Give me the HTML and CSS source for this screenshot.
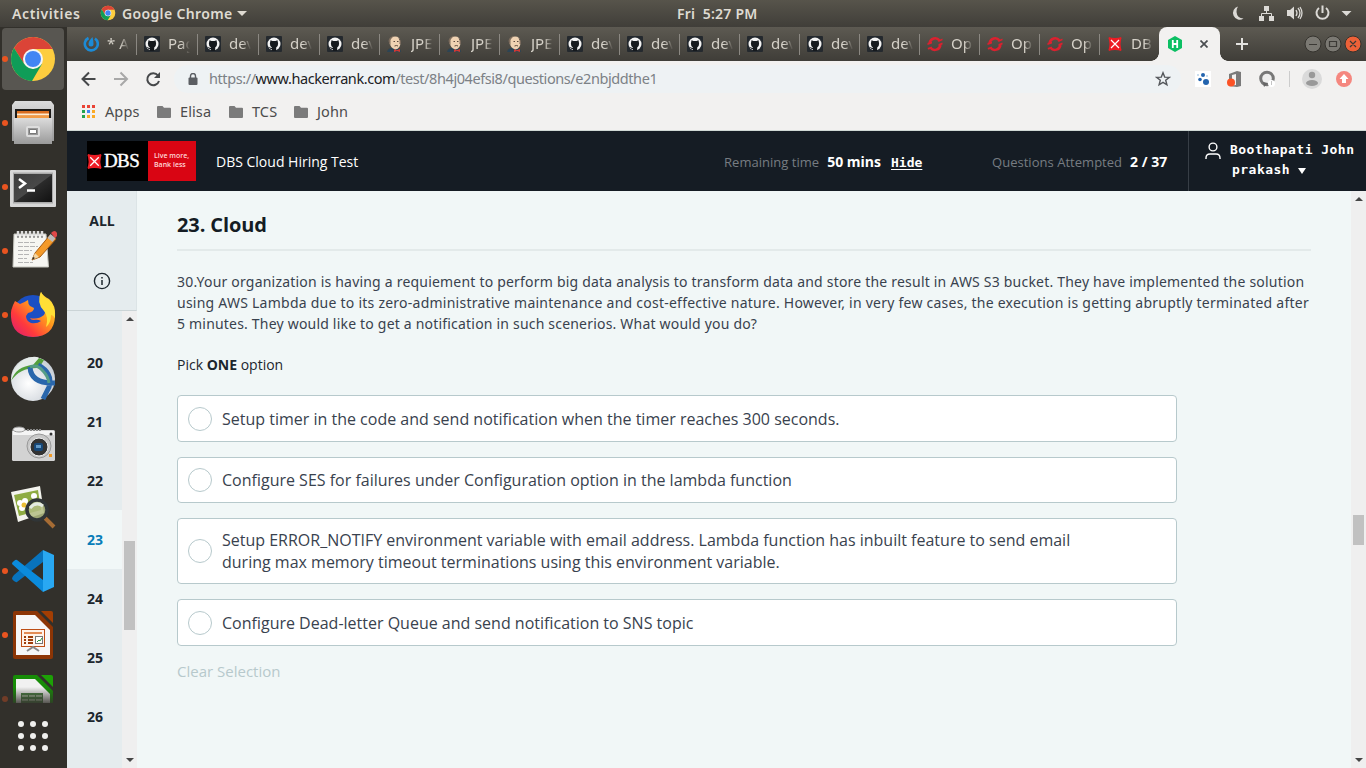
FILE: index.html
```html
<!DOCTYPE html>
<html lang="en">
<head>
<meta charset="utf-8">
<title>DBS Cloud Hiring Test</title>
<link rel="stylesheet" href="styles.css">
</head>
<body>
<svg class="defs" width="0" height="0">
  <defs>
    <linearGradient id="metal" x1="0" y1="0" x2="0" y2="1"><stop offset="0" stop-color="#dcdcdc"/><stop offset="1" stop-color="#9a9a9a"/></linearGradient>
    <linearGradient id="screen" x1="0" y1="0" x2="1" y2="1"><stop offset="0" stop-color="#3c3c3c"/><stop offset=".5" stop-color="#484848"/><stop offset=".52" stop-color="#2b2b2b"/><stop offset="1" stop-color="#111"/></linearGradient>
    <linearGradient id="fox" x1="1" y1="0" x2="0" y2="1"><stop offset="0" stop-color="#fff04a"/><stop offset=".4" stop-color="#ff9a1c"/><stop offset=".7" stop-color="#ff3a3c"/><stop offset="1" stop-color="#d8187c"/></linearGradient>
    <radialGradient id="globe" cx=".4" cy=".6" r=".7"><stop offset="0" stop-color="#fff"/><stop offset="1" stop-color="#c3cad2"/></radialGradient>
    <linearGradient id="fade" x1="0" y1="0" x2="0" y2="1"><stop offset="0" stop-color="#32302b" stop-opacity="0"/><stop offset="1" stop-color="#32302b"/></linearGradient>
  </defs>
  <symbol id="chrome" viewBox="0 0 48 48">
    <circle cx="24" cy="24" r="22" fill="#fdcd3f"/>
    <path d="M24 14H43.6A22 22 0 0 0 5 13L15.300 29z" fill="#db4437"/>
    <path d="M5 13A22 22 0 0 0 23 46L33 29 24 34 15.300 29z" fill="#0f9d58"/>
    <circle cx="24" cy="24" r="10" fill="#f5f5f5"/><circle cx="24" cy="24" r="8" fill="#4285f4"/>
  </symbol>
  <symbol id="github" viewBox="0 0 16 16">
    <rect width="16" height="16" rx="1" fill="#24292e"/><circle cx="8" cy="8" r="6.500" fill="#f3f3f3"/>
    <path d="M5.800 15v-3.600Q3.800 10.500 3.900 7.600L4.500 4.200 6.500 5h3l2-.8.6 3.400q.1 2.900-1.900 3.800V15z" fill="#15191d"/>
    <path d="M6 12.500H4.500L3.500 11" fill="none" stroke="#15191d"/>
  </symbol>
  <symbol id="jenkins" viewBox="0 0 16 16">
    <path d="M0 16q1-4 5-4h4q5 0 5 4z" fill="#2c4454"/><path d="M2 5Q3 .5 8 .5T13.500 6q0 6.500-5 7.500Q3 12 2 5z" fill="#efd2b3"/>
    <path d="M1.500 5Q2 .5 7.500 0q-3 1.500-4 4v5Q2 8 1.500 5z" fill="#7d6c5d"/><path d="M12 2.500q2 2 1 5.500" stroke="#6b5b50" fill="none"/>
    <path d="M6.500 5.500h1.500m2 0h1.500M7.500 10q2-1 3.500 0" stroke="#5d4b40" fill="none"/><path d="M7 13l2.500 1.200L13 13v3l-3-1-3 1z" fill="#d33833"/>
  </symbol>
  <symbol id="openshift" viewBox="0 0 16 16">
    <path d="M2.600 7A5.600 5.600 0 0 1 12.500 4.500M13.400 9A5.600 5.600 0 0 1 3.500 11.800" fill="none" stroke="#db212f" stroke-width="2.500"/>
    <path d="M.5 7l4.500-1.600v2L.5 9zM11 4.500l4.500-2v1.700L11.500 6zM11.500 8l4-1.500v2L11.500 10zM.5 12l4-1.500.7 1.600L1.500 13.800z" fill="#db212f"/>
  </symbol>
  <symbol id="cross" viewBox="0 0 14 14">
    <path d="M1 0q2 1 6 1t6-1q1 1 0 3-1 4 0 8 1 2 0 3-2-1-6-1t-6 1q-1-1 0-3 1-4 0-8-1-2 0-3z" fill="#ed1c24"/><path d="M3 3l8 8M11 3l-8 8" stroke="#fff" stroke-width="1.200"/>
  </symbol>
  <symbol id="folder" viewBox="0 0 14 12"><path d="M1 0h4.500L7 1.700h6q1 0 1 1V11q0 1-1 1H1q-1 0-1-1V1q0-1 1-1z" fill="#7b7b7b"/></symbol>
</svg>

<header class="topbar">
  <span class="activities">Activities</span>
  <svg class="app-icon" width="16" height="16"><use href="#chrome"/></svg>
  <span class="app-name">Google Chrome</span><i class="caret"></i>
  <span class="clock">Fri&nbsp; 5:27 PM</span>
  <svg class="tray" width="126" height="26" viewBox="0 0 126 26" fill="none">
    <path d="M10 6.500A6.700 6.700 0 1 0 15.500 18.500Q9 18 8.500 12 8.500 8.500 10 6.500z" fill="#dcdad6"/>
    <path d="M36 6h5v5h-5zM31 16h5v5h-5zM41 16h5v5h-5z" fill="#dcdad6"/><path d="M38.500 11v2.500M33.500 17v-3.500h10V17" stroke="#dcdad6"/>
    <path d="M59 10h3l4-3.500v13L62 16h-3z" fill="#dcdad6"/><path d="M68 10q2 3 0 6M70 8q4 5 0 10M72 7q4 6 0 12" stroke="#dcdad6" stroke-width="1.300"/>
    <path d="M91 8a6 6 0 1 0 7 0M94.500 5.500V13" stroke="#dcdad6" stroke-width="2"/><path d="M113.500 11h10l-5 5z" fill="#dcdad6"/>
  </svg>
</header>

<div class="desktop">
<nav class="dock">
  <div class="launcher current"><i class="dot"></i><svg width="48" height="48"><use href="#chrome"/></svg></div>
  <div class="launcher"><i class="dot"></i><svg width="48" height="48" viewBox="0 0 48 48">
    <path d="M6 2h36l3 4v36H3V6z" fill="url(#metal)"/><path d="M6 10h36v13H6z" fill="#1d1b19"/><path d="M8 12h32v9H8z" fill="#d96d20"/><path d="M8 14.500h32v2H8z" fill="#fdebd0"/><path d="M8 16.500h32v3H8z" fill="#f29b45"/>
    <path d="M5 19h38v26H5z" fill="url(#metal)"/><rect x="18" y="28" width="12" height="9" rx="1" fill="#999" stroke="#ddd" stroke-width="2"/><path d="M20.500 30.500h7v4h-7z" fill="#fff" stroke="#777"/></svg></div>
  <div class="launcher"><i class="dot"></i><svg width="48" height="48" viewBox="0 0 48 48">
    <rect x="1" y="7" width="46" height="37" rx="1" fill="#d7d7d7"/><rect x="4" y="9.500" width="40" height="31" fill="#aaa"/><rect x="5" y="11" width="38" height="28" fill="url(#screen)"/><path d="M10 16l6 4.500-6 4.500M18 27.500h8" stroke="#fff" stroke-width="2.500" fill="none"/></svg></div>
  <div class="launcher"><i class="dot"></i><svg width="48" height="48" viewBox="0 0 48 48">
    <path d="M5 7h32l2.500 33H4z" fill="#f6f6f2" stroke="#c4c4bd"/><path d="M9 4v6m4-6v6m4-6v6m4-6v6m4-6v6m4-6v6m4-6v6" stroke="#ddd" stroke-width="2.500"/><path d="M9 9v2m4-2v2m4-2v2m4-2v2m4-2v2m4-2v2m4-2v2" stroke="#555"/>
    <path d="M9 15.500h17M9 19.500h20M9 23.500h14M9 27.500h12M9 31.500h9M9 35.500h15" stroke="#b5b5b5" stroke-dasharray="5 1"/><path d="M23 33l3-7L41 8l6 4-16 18z" fill="#f49a29" stroke="#a85d12"/><path d="M23 33l3-7 4 4z" fill="#f3d5a1"/><path d="M23 33l1-3 2 1z" fill="#222"/><path d="M38.500 11l3-4 5 4-3 4z" fill="#bbb"/><path d="M42 6q4-4 6 0 1 3-2 5z" fill="#e04848"/></svg></div>
  <div class="launcher"><i class="dot"></i><svg width="48" height="48" viewBox="0 0 48 48">
    <circle cx="24" cy="25" r="21" fill="#1b4fc4"/><path d="M6 10l5 3q5-2 8-4 0 4 2 6l4 2q0 4-6 5l-2 3q0 5 5 7 6 1 10-2-3-2-8-1-2 0-3-2 8 2 14-3 4-6-1-13Q29 6 32 1q2 4 8 7 7 6 6 18-1 19-22 20Q3 45 2 26 1 19 6 10z" fill="url(#fox)"/><path d="M32 1q2 5 8 8 7 7 6 18-2-3-4-3 0 8-5 12 3-10-2-16Q27 12 32 1z" fill="#ffdf36"/></svg></div>
  <div class="launcher"><i class="dot"></i><svg width="48" height="48" viewBox="0 0 48 48">
    <circle cx="24" cy="24" r="22" fill="url(#globe)"/><path d="M2 27Q3 13 14 5q7-4 14-3l7 3-6 6Q10 12 2 27z" fill="#e6ecea"/><path d="M2 26Q7 11 24 10l6-7 5 2-5 8Q11 12 2 26z" fill="#539f3c"/><path d="M21 12q1 17 25 16M29 10q15 8 11 22l-6 12" fill="none" stroke="#2a67ac" stroke-width="5"/><path d="M21 12q7-3 13 4 5 5 6 12" fill="none" stroke="#559d86" stroke-width="3"/></svg></div>
  <div class="launcher"><svg width="48" height="48" viewBox="0 0 48 48">
    <rect x="3" y="11" width="43" height="31" rx="1.500" fill="#d3d3d3"/><path d="M4 12h41v4H4z" fill="#f5f5f5"/><ellipse cx="10" cy="10.500" rx="6" ry="2.500" fill="#eee" stroke="#999"/><path d="M18 11h15" stroke="#888" stroke-width="2" stroke-dasharray="2 1"/><circle cx="30" cy="27" r="12" fill="#c8c8c8" stroke="#999"/><circle cx="30" cy="28" r="9" fill="#333" stroke="#eee"/><rect x="25" y="24" width="9" height="8" rx="2" fill="#184878"/><path d="M27 26h5v3h-5z" fill="#6199c8"/><circle cx="42" cy="15" r="1.500" fill="#333"/><path d="M40 35h3v3h-3z" fill="#f29a26"/></svg></div>
  <div class="launcher"><svg width="48" height="48" viewBox="0 0 48 48">
    <path d="M2 9l29-6 4 27-26 9z" fill="#f4f4ee"/><path d="M5 12l24-5 3 20-22 6z" fill="#8fac42"/><g fill="#fff"><circle cx="16" cy="18" r="3"/><circle cx="11" cy="20" r="3"/><circle cx="13" cy="25" r="3"/><circle cx="19" cy="23" r="3"/><circle cx="25" cy="13" r="3"/></g><circle cx="15" cy="22" r="2.500" fill="#eabf36"/><path d="M36 35l9 9" stroke="#a66c34" stroke-width="4"/><circle cx="28" cy="27" r="10" fill="#b1bc83" fill-opacity=".85" stroke="#303537" stroke-width="3.500"/><path d="M21 25q6-7 13-2" stroke="#e4ebe2" stroke-width="3" fill="none"/></svg></div>
  <div class="launcher"><i class="dot"></i><svg width="48" height="48" viewBox="0 0 48 48">
    <path d="M34 3v12L8 35q-2 1-5-3 0-2 2-4z" fill="#0873bd"/><path d="M8 13l26 20v12L3 17q0-2 2-3 2-2 3-1z" fill="#0b8bdc"/><path d="M34 3l11 5v32l-11 5z" fill="#29a8f2"/></svg></div>
  <div class="launcher"><i class="dot"></i><svg width="48" height="48" viewBox="0 0 48 48">
    <path d="M6 0h22l16 16v30q0 2-2 2H6q-2 0-2-2V2q0-2 2-2z" fill="#8c3505"/><path d="M32 0h10q2 0 2 2v10z" fill="#a33e03"/><path d="M7 4h19l15 15v25H7z" fill="#f6f6f6"/><rect x="12.500" y="18.500" width="23" height="17" fill="#fff2e9" stroke="#bd4e15"/><path d="M15 22h18" stroke="#e38b55" stroke-width="2"/><path d="M15 26h2m2 0h5m-9 3h2m2 0h5m-9 3h2m2 0h5" stroke="#9c3c09" stroke-width="2"/><rect x="26.500" y="25.500" width="7" height="7" fill="#fff" stroke="#777"/><path d="M28 31l2-2 1 1 2-3" stroke="#279a39" fill="none"/><path d="M18 40l6-4 6 4" fill="none" stroke="#888" stroke-width="2"/></svg></div>
  <div class="launcher cut"><i class="dot dim"></i><svg width="48" height="48" viewBox="0 0 48 48">
    <path d="M6 0h22l16 16v32H4V2q0-2 2-2z" fill="#178c07"/><path d="M32 0h10q2 0 2 2v10z" fill="#1da106"/><path d="M7 4h19l15 15v29H7z" fill="#f1f1f1"/><path d="M12 18h22v14H12z" fill="#477d41"/><path d="M13 20h6v2h-6zm7 0h6v2h-6zm7 0h6v2h-6zm-14 4h6v2h-6zm7 0h6v2h-6zm7 0h6v2h-6z" fill="#98b48f"/><path d="M3 12h42v20H3z" fill="url(#fade)"/></svg></div>
  <div class="apps-grid"><i></i><i></i><i></i><i></i><i></i><i></i><i></i><i></i><i></i></div>
</nav>

<main class="browser">
  <div class="tabs">
    <div class="tab wide"><svg width="16" height="16" viewBox="0 0 16 16"><path d="M5.500 2A6.500 6.500 0 1 0 12 2.500" fill="none" stroke="#1c8bd6" stroke-width="2.600"/><path d="M9.500 1q-4 4-4 7 0 2.500 2.500 2.500T10.500 8q0-3-1-7z" fill="#1c8bd6"/></svg><span>* A</span></div>
    <div class="tab wide"><svg width="16" height="16"><use href="#github"/></svg><span>Pag</span></div>
    <div class="tab wide"><svg width="16" height="16"><use href="#github"/></svg><span>dev</span></div>
    <div class="tab wide"><svg width="16" height="16"><use href="#github"/></svg><span>dev</span></div>
    <div class="tab"><svg width="16" height="16"><use href="#github"/></svg><span>dev</span></div>
    <div class="tab"><svg width="16" height="16"><use href="#jenkins"/></svg><span>JPE</span></div>
    <div class="tab"><svg width="16" height="16"><use href="#jenkins"/></svg><span>JPE</span></div>
    <div class="tab"><svg width="16" height="16"><use href="#jenkins"/></svg><span>JPE</span></div>
    <div class="tab"><svg width="16" height="16"><use href="#github"/></svg><span>dev</span></div>
    <div class="tab"><svg width="16" height="16"><use href="#github"/></svg><span>dev</span></div>
    <div class="tab"><svg width="16" height="16"><use href="#github"/></svg><span>dev</span></div>
    <div class="tab"><svg width="16" height="16"><use href="#github"/></svg><span>dev</span></div>
    <div class="tab"><svg width="16" height="16"><use href="#github"/></svg><span>dev</span></div>
    <div class="tab"><svg width="16" height="16"><use href="#github"/></svg><span>dev</span></div>
    <div class="tab"><svg width="16" height="16"><use href="#openshift"/></svg><span>Op</span></div>
    <div class="tab"><svg width="16" height="16"><use href="#openshift"/></svg><span>Op</span></div>
    <div class="tab"><svg width="16" height="16"><use href="#openshift"/></svg><span>Op</span></div>
    <div class="tab last"><svg width="16" height="14"><use href="#cross"/></svg><span>DB</span></div>
    <div class="tab-active">
      <svg width="16" height="16" viewBox="0 0 16 16"><path d="M8 0l7 4v8l-7 4-7-4V4z" fill="#0cbf63"/><path d="M5.800 4v8M10.200 4v8M5.800 8h4.400" stroke="#fff" stroke-width="1.800"/></svg>
      <svg width="8" height="8" viewBox="0 0 8 8"><path d="M.5.5l7 7m0-7l-7 7" stroke="#4a4d50" stroke-width="1.700"/></svg>
    </div>
    <svg class="new-tab" width="12" height="12" viewBox="0 0 12 12"><path d="M6 0v12M0 6h12" stroke="#e3e2df" stroke-width="2"/></svg>
    <svg class="window-buttons" width="58" height="20" viewBox="0 0 58 20"><g stroke="#35332e"><circle cx="9" cy="10" r="8" fill="#7b7973"/><circle cx="29" cy="10" r="8" fill="#7b7973"/><circle cx="49" cy="10" r="8" fill="#ed6138"/></g><path d="M5 10.500h8M25.500 7.500h7v5h-7zM46 7l6 6m0-6l-6 6" fill="none" stroke="#3b3935" stroke-width="1.200"/></svg>
  </div>

  <div class="toolbar">
    <svg class="nav-icons" width="80" height="20" viewBox="0 0 80 20" fill="none" stroke-width="2"><path d="M14.500 10H2M8 3.500L1.500 10 8 16.500" stroke="#46484a"/><path d="M33 10h12.500M39.500 3.500L46 10l-6.500 6.500" stroke="#a8a8a8"/><path d="M77 6.500A6 6 0 1 0 78 12" stroke="#46484a"/><path d="M79 3v6h-6z" fill="#46484a"/></svg>
    <div class="address">
      <svg width="10" height="12" viewBox="0 0 10 12"><path d="M2.500 5V3a2.500 2.500 0 0 1 5 0v2" fill="none" stroke="#5b5e63" stroke-width="1.400"/><rect x=".5" y="4.500" width="9" height="7.500" rx="1" fill="#5b5e63"/></svg>
      <span class="url">https://<b>www.hackerrank.com</b>/test/8h4j04efsi8/questions/e2nbjddthe1</span>
      <svg class="star" width="16" height="16" viewBox="0 0 16 16"><path d="M8 1.800l1.700 4.300 4.600.3-3.600 2.900 1.200 4.500L8 11.300l-3.900 2.500 1.200-4.500-3.600-2.900 4.600-.3z" fill="none" stroke="#55585c" stroke-width="1.400"/></svg>
    </div>
    <svg class="extensions" width="160" height="22" viewBox="0 0 160 22">
      <path d="M1 3h16v16H1z" fill="#fff"/><g fill="#2364ae"><circle cx="9" cy="7" r="2"/><circle cx="6" cy="11.500" r="1.800"/><circle cx="12" cy="14" r="3"/></g><g fill="#b9d2e9"><circle cx="4" cy="7" r="1"/><circle cx="13" cy="8" r="1"/></g>
      <path d="M35 6l8-3 4 1v14l-4 1-8-1 7-1V6l-4 1v5l-3 1z" fill="#7a7a7a"/><circle cx="37" cy="14.500" r="4" fill="#fb5225"/>
      <circle cx="73" cy="10.500" r="6.300" fill="#eee" stroke="#777" stroke-width="3"/><path d="M69 14l1 5 4-4z" fill="#666"/><circle cx="77.500" cy="15.500" r="3.500" fill="#fff"/><path d="M77.500 13.500v1m0 1v1" stroke="#888"/>
      <path d="M95.500 3v16" stroke="#ccc"/><circle cx="118" cy="11" r="10" fill="#dadada"/><circle cx="118" cy="7" r="3.200" fill="#999"/><ellipse cx="118" cy="15" rx="6" ry="3" fill="#999"/>
      <circle cx="150" cy="11" r="8" fill="#f5877f"/><path d="M150 6l4.500 5H152v4h-4v-4h-2.500z" fill="#fff"/>
    </svg>
  </div>

  <div class="bookmarks">
    <svg width="14" height="14" viewBox="0 0 14 14"><path d="M0 0h3v3H0zm5 0h3v3H5zm5 0h3v3h-3z" fill="#ea4335"/><path d="M0 5h3v3H0zM0 10h3v3H0z" fill="#24a34f"/><path d="M5 5h3v3H5z" fill="#4285f4"/><path d="M10 5h3v3h-3zm-5 5h3v3H5zm5 0h3v3h-3z" fill="#fbaa25"/></svg><span class="bm-apps">Apps</span>
    <svg width="14" height="12"><use href="#folder"/></svg><span class="bm-elisa">Elisa</span>
    <svg width="14" height="12"><use href="#folder"/></svg><span class="bm-tcs">TCS</span>
    <svg width="14" height="12"><use href="#folder"/></svg><span class="bm-john">John</span>
  </div>

  <div class="test-header">
    <div class="logo"><div class="logo-name"><svg width="15" height="15"><use href="#cross"/></svg><span>DBS</span></div><div class="logo-tag">Live more,<br>Bank less</div></div>
    <span class="test-name">DBS Cloud Hiring Test</span>
    <div class="remaining"><span class="muted">Remaining time</span><b>50 mins</b><a>Hide</a></div>
    <div class="attempted"><span class="muted">Questions Attempted</span><b>2 / 37</b></div>
    <div class="user"><svg width="16" height="18" viewBox="0 0 16 18"><circle cx="8" cy="5" r="3.900" fill="none" stroke="#fff" stroke-width="1.400"/><path d="M1 17v-1q0-4 4-4h6q4 0 4 4v1" fill="none" stroke="#fff" stroke-width="1.400"/></svg><div class="user-name">Boothapati John<br><span class="second">prakash <i></i></span></div></div>
  </div>

  <div class="test-body">
    <aside class="questions">
      <div class="all"><span>ALL</span><svg width="18" height="18" viewBox="0 0 18 18"><circle cx="9" cy="9" r="7.600" fill="none" stroke="#1c262d" stroke-width="1.400"/><path d="M9 8v5M9 5v1.500" stroke="#1c262d" stroke-width="1.500"/></svg></div>
      <div class="list">
        <div class="numbers"><span>20</span><span>21</span><span>22</span><span class="selected">23</span><span>24</span><span>25</span><span>26</span></div>
        <div class="scroll side"><i class="up"></i><i class="thumb"></i><i class="down"></i></div>
      </div>
    </aside>
    <section class="question">
      <h1>23. Cloud</h1>
      <div class="prompt"><p class="l1">30.Your organization is having a requiement to perform big data analysis to transform data and store the result in AWS S3 bucket. They have implemented the solution</p><p class="l2">using AWS Lambda due to its zero-administrative maintenance and cost-effective nature. However, in very few cases, the execution is getting abruptly terminated after</p><p class="l3">5 minutes. They would like to get a notification in such scenerios. What would you do?</p></div>
      <p class="pick">Pick <b>ONE</b> option</p>
      <div class="options">
        <label class="option"><i></i><span>Setup timer in the code and send notification when the timer reaches 300 seconds.</span></label>
        <label class="option short"><i></i><span>Configure SES for failures under Configuration option in the lambda function</span></label>
        <label class="option tall"><i></i><span>Setup ERROR_NOTIFY environment variable with email address. Lambda function has inbuilt feature to send email<br>during max memory timeout terminations using this environment variable.</span></label>
        <label class="option"><i></i><span>Configure Dead-letter Queue and send notification to SNS topic</span></label>
      </div>
      <p class="clear">Clear Selection</p>
    </section>
    <div class="scroll page"><i class="up"></i><i class="thumb"></i><i class="down"></i></div>
  </div>
</main>
</div>
</body>
</html>
```
FILE: styles.css
```css
* { box-sizing: border-box; }
body { margin: 0; width: 1366px; height: 768px; overflow: hidden; display: flex; flex-direction: column; font-family: "Open Sans", "Noto Sans", sans-serif; white-space: nowrap; background: #32302b; }
p, h1 { margin: 0; }
svg { display: block; flex: none; }
.defs { position: absolute; }

.topbar { height: 27px; flex: none; display: flex; align-items: center; position: relative; padding: 0 0 1px 12px; background: linear-gradient(#57544b, #403e39); color: #dfdbd2; font: 600 14px "Noto Sans", sans-serif; }
.activities { width: 88px; letter-spacing: .6px; }
.app-icon { margin-right: 6px; }
.app-name { letter-spacing: .35px; }
.caret { margin-left: 5px; border: 5px solid transparent; border-top-color: #dfdbd2; border-bottom: 0; }
.clock { position: absolute; left: 677px; letter-spacing: .2px; }
.tray { margin-left: auto; margin-right: 12px; }

.desktop { flex: 1; display: flex; min-height: 0; }
.dock { width: 67px; flex: none; background: #32302b; padding: 0 3px 0 2px; overflow: hidden; }
.launcher { height: 64px; padding: 0 0 0 7px; display: flex; align-items: center; position: relative; }
.launcher.current::before { content: ""; position: absolute; left: 0; top: 1px; width: 62px; height: 62px; border-radius: 4px; background: #585651; }
.launcher svg { position: relative; }
.dot { position: absolute; left: 0; top: 29px; width: 6px; height: 6px; border-radius: 50%; background: #e95420; }
.dot.dim { opacity: .35; }
.launcher.cut { height: 36px; align-items: flex-start; overflow: hidden; padding-top: 8px; }
.apps-grid { display: grid; grid-template-columns: repeat(3, 6px); gap: 6px; margin: 18px 0 0 16px; }
.apps-grid i { width: 6px; height: 6px; border-radius: 50%; background: #f0f0ee; }

.browser { flex: 1; min-width: 0; display: flex; flex-direction: column; }
.tabs { height: 34px; flex: none; display: flex; align-items: center; padding-left: 9px; background: linear-gradient(#5d5a52, #3f3d38); }
.tab { width: 60px; height: 34px; flex: none; display: flex; align-items: center; gap: 8px; padding-left: 7px; background: linear-gradient(#8b8882, #8b8882) right center / 1px 21px no-repeat; color: #d5d1c8; font: 15px "Noto Sans", sans-serif; }
.tab.wide { width: 61px; }
.tab.last { background: none; width: 59px; }
.tab span { width: 22px; padding-bottom: 2px; overflow: hidden; -webkit-mask-image: linear-gradient(90deg, #000 60%, transparent); mask-image: linear-gradient(90deg, #000 60%, transparent); }
.tab-active { position: relative; width: 61px; height: 34px; flex: none; display: flex; align-items: center; padding-left: 8px; gap: 17px; background: #f2f1f0; border-radius: 8px 8px 0 0; }
.tab-active::before, .tab-active::after { content: ""; position: absolute; bottom: 0; left: -8px; width: 8px; height: 8px; background: radial-gradient(circle at 0 0, transparent 7.5px, #f2f1f0 8px); }
.tab-active::after { left: auto; right: -8px; transform: scaleX(-1); }
.new-tab { margin-left: 16px; }
.window-buttons { margin-left: auto; margin-right: 4px; }

.toolbar { height: 36px; flex: none; background: #f2f1f0; display: flex; align-items: center; }
.nav-icons { margin-left: 14px; }
.address { width: 1007px; height: 28px; margin-left: 13px; border-radius: 14px; background: #eef2f4; display: flex; align-items: center; padding: 0 10px 0 14px; }
.url { margin-left: 11px; padding-bottom: 2px; font: 14.5px "Noto Sans", sans-serif; letter-spacing: -.42px; color: #7c8186; }
.url b { font-weight: 400; color: #202124; }
.star { margin-left: auto; }
.extensions { margin-left: 13px; }
.bookmarks { height: 34px; flex: none; padding: 0 0 4px 15px; border-bottom: 1px solid #cfd8d4; background: #f2f1f0; display: flex; align-items: center; font: 14.5px "Noto Sans", sans-serif; color: #4c4c4c; }
.bookmarks span { margin-left: 9px; padding-bottom: 2px; letter-spacing: .1px; }
.bm-apps { width: 52px; } .bm-elisa { width: 49px; } .bm-tcs { width: 42px; }

.test-header { height: 60px; flex: none; background: #151c24; color: #fff; display: flex; align-items: center; padding-left: 20px; }
.logo { width: 109px; height: 40px; display: flex; }
.logo-name { width: 61px; background: #000; display: flex; align-items: center; font: 19px "Liberation Serif", serif; -webkit-text-stroke: .4px #fff; }
.logo-name span { margin-left: 2px; letter-spacing: -.6px; }
.logo-tag { flex: 1; background: #d90513; padding: 10px 0 0 6px; font: 600 7px/9px "Open Sans", sans-serif; color: #ffd7d7; }
.test-name { margin-left: 20px; width: 508px; font-size: 14px; }
.remaining { width: 268px; display: flex; align-items: baseline; font-size: 14px; }
.muted { color: #777c82; font-size: 13px; letter-spacing: .03px; }
.remaining b, .attempted b { margin-left: 8px; font-size: 14px; }
.remaining a { margin-left: 10px; font: 700 13px "DejaVu Sans Mono", monospace; text-decoration: underline; text-underline-offset: 2px; }
.attempted { width: 196px; display: flex; align-items: baseline; }
.user { height: 60px; flex: 1; border-left: 1px solid #373e46; padding: 8px 0 0 16px; display: flex; font: 700 13px/20px "DejaVu Sans Mono", monospace; letter-spacing: .47px; }
.user svg { margin-top: 3px; }
.user-name { margin-left: 9px; padding-top: 1px; }
.second { padding-left: 2px; }
.second i { display: inline-block; border: 4px solid transparent; border-top: 6px solid #fff; border-bottom: 0; }

.test-body { flex: 1; min-height: 0; display: flex; background: #f1f7f7; }
.questions { width: 70px; flex: none; display: flex; flex-direction: column; background: #e5ecee; }
.all { height: 120px; flex: none; border-bottom: 1px solid #cbd4d6; border-right: 1px solid #dce4e6; display: flex; flex-direction: column; align-items: center; padding-top: 20px; font: 700 14px/20px "Open Sans", sans-serif; color: #1c262d; }
.all span { padding-left: 1px; }
.all svg { margin-top: 41px; }
.list { flex: 1; display: flex; min-height: 0; }
.numbers { width: 55px; padding-top: 22px; display: flex; flex-direction: column; }
.numbers span { height: 59px; line-height: 59px; padding-left: 1px; text-align: center; font-weight: 700; font-size: 14px; color: #1c262d; }
.numbers .selected { background: #f1f7f7; color: #087db9; }
.scroll { width: 15px; flex: none; background: #efefef; display: flex; flex-direction: column; align-items: center; }
.scroll .up, .scroll .down { border: 4px solid transparent; border-bottom-color: #454545; border-top: 0; margin-top: 6px; }
.scroll .down { border-top: 4px solid #454545; border-bottom: 0; margin: auto 0 6px; }
.scroll .thumb { width: 11px; background: #c1c1c1; }
.side .thumb { height: 89px; margin-top: 220px; }
.page .thumb { height: 30px; margin-top: 314px; }

.question { flex: 1; min-width: 0; padding: 20px 40px 0 40px; }
h1 { height: 40px; border-bottom: 2px solid #e3eaea; font-size: 20px; line-height: 27px; letter-spacing: -.1px; color: #151c24; width: 1134px; }
.prompt { margin-top: 20px; font: 14px/21px "Noto Sans", sans-serif; color: #39424e; }
.l1 { letter-spacing: .203px; }
.l2 { letter-spacing: .243px; }
.l3 { letter-spacing: .197px; }
.pick { margin-top: 20px; font-size: 14px; line-height: 21px; color: #1c262d; }
.options { margin-top: 20px; display: flex; flex-direction: column; gap: 15px; }
.option { width: 1000px; height: 47px; padding-left: 10px; border: 1px solid #b7c9cc; border-radius: 4px; background: #fff; display: flex; align-items: center; font-size: 16px; line-height: 22px; color: #39424e; }
.option.short { height: 46px; }
.option.tall { height: 66px; }
.option i { width: 24px; height: 24px; flex: none; border: 1px solid #b7c9cc; border-radius: 50%; }
.option span { margin-left: 10px; }
.clear { margin-top: 15px; font-size: 15px; line-height: 21px; color: #b7c9cc; }
```
